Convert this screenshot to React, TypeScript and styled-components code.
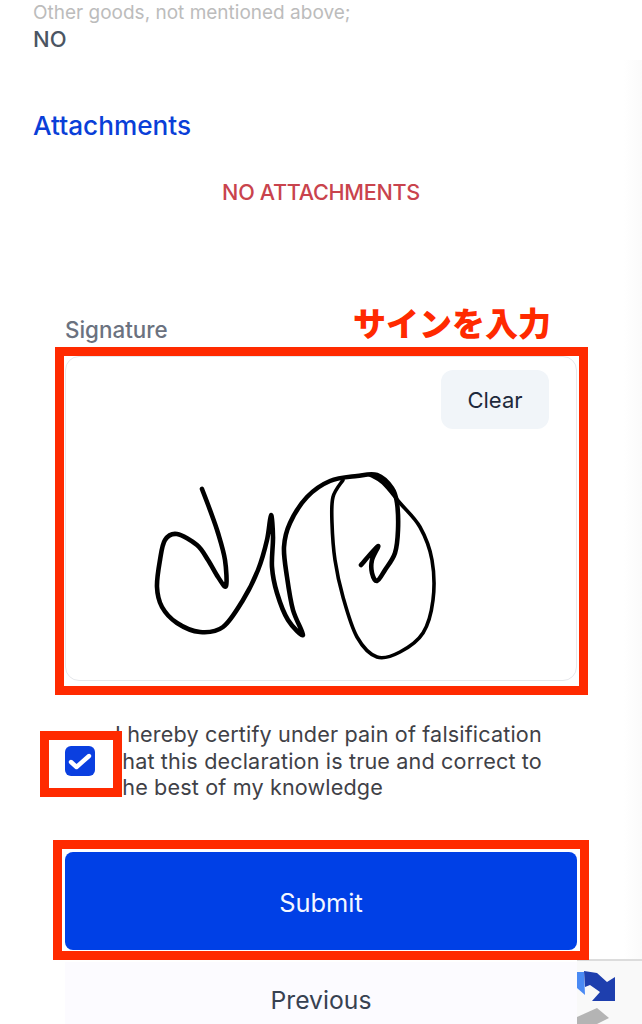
import React, { FC } from 'react'
import styled, { createGlobalStyle } from 'styled-components'

const GlobalStyle = createGlobalStyle`
html, body {
    margin: 0;
    padding: 0;
    background: #fff;
}
`

const Page = styled.div`
position: relative;
width: 642px;
height: 1024px;
overflow: hidden;
background: #fff;
font-family: Inter, "Noto Sans", "Noto Sans CJK JP", sans-serif;
`

const Edge = styled.div`
position: absolute;
top: 60px;
right: 0;
bottom: 64px;
width: 18px;
background: linear-gradient(to right, #fff, #fafafa);
`

const Summary = styled.section`
padding: 1px 33px 0;
`

const FieldLabel = styled.div`
font-size: 19px;
line-height: 24px;
color: #bcbcbc;
`

const FieldValue = styled.div`
margin-top: 1px;
font-size: 22px;
line-height: 27px;
font-weight: 500;
color: #4b5563;
`

const SectionTitle = styled.h2`
margin: 57px 0 0;
font-size: 26.2px;
line-height: 32px;
font-weight: 500;
color: #0a3fd8;
`

const EmptyNote = styled.p`
margin: 37px 0 0;
text-align: center;
font-size: 21.6px;
line-height: 26px;
font-weight: 500;
letter-spacing: -0.3px;
color: #c9434d;
`

const Form = styled.form`
margin-top: 94px;
padding: 0 65px;
`

const SignatureHead = styled.div`
display: flex;
justify-content: space-between;
align-items: flex-end;
height: 42px;
`

const SignatureLabel = styled.label`
position: relative;
top: 2px;
font-size: 22.4px;
line-height: 26px;
font-weight: 500;
color: #6b7280;
`

const Callout = styled.span`
margin: 0 26px 0 0;
position: relative;
top: 3px;
font-family: "Noto Sans CJK JP", sans-serif;
font-size: 33px;
line-height: 44px;
font-weight: 900;
color: #ff2a00;
`

const Framed = styled.div`
position: relative;
`

const Frame = styled.div<{ $inset: string }>`
position: absolute;
inset: ${p => p.$inset};
border: 9px solid #ff2a00;
pointer-events: none;
z-index: 2;
`

const SignaturePad = styled.div`
display: flex;
flex-direction: column;
align-items: flex-end;
box-sizing: border-box;
height: 325px;
margin-top: 15px;
padding: 13px 27px 0 0;
background: #fff;
border: 1px solid #e5e7eb;
border-radius: 14px;
`

const ClearButton = styled.button`
width: 108px;
height: 59px;
padding: 0;
border: none;
border-radius: 12px;
background: #f1f5f9;
font-family: inherit;
font-size: 22px;
color: #1e293b;
`

const SignatureDrawing = styled.svg`
display: block;
align-self: flex-start;
margin: 41px 0 0 84px;
`

const Certify = styled.div`
display: flex;
align-items: center;
margin-top: 40px;
`

const CheckBox = styled.span`
display: flex;
flex: none;
align-items: center;
justify-content: center;
width: 30px;
height: 30px;
border-radius: 6px;
background: #0a3fe0;
`

const CertifyText = styled.p`
margin: 0 -32px 0 20px;
font-size: 21.6px;
line-height: 26.5px;
letter-spacing: 0.15px;
white-space: nowrap;
color: #3f4147;
`

const SubmitButton = styled.button`
display: block;
width: 100%;
height: 98px;
padding: 3px 0 0;
border: none;
border-radius: 8px;
background: #0040e6;
font-family: inherit;
font-size: 25.4px;
color: #f4f7ff;
`

const SubmitRow = styled.div`
margin-top: 51px;
`

const Footer = styled.div`
position: absolute;
left: 65px;
right: 0;
bottom: 0;
height: 62px;
padding-right: 65px;
display: flex;
align-items: flex-end;
justify-content: center;
background: #fcfbff;
`

const PreviousButton = styled.button`
height: 48px;
width: 100%;
padding: 0;
border: none;
background: none;
font-family: inherit;
font-size: 24.7px;
color: #374151;
`

const CaptchaBadge = styled.div`
position: absolute;
right: 0;
bottom: 0;
width: 65px;
height: 65px;
box-sizing: border-box;
border-top: 2px solid #dcdcdc;
background: #f9f9f9;
overflow: hidden;
`

const CaptchaIcon = styled.svg`
display: block;
`

// signature strokes, sampled from the picture
const stroke1: [number, number][] = [
    [202, 489], [210, 510], [218, 533], [225, 560], [226, 586], [218, 577], [208, 560], [197, 545],
    [177, 534], [165, 540], [160, 560], [157, 587], [162, 607], [177, 623], [200, 632], [223, 627],
    [243, 600], [258, 570], [267, 540], [271, 515], [273, 537], [272, 567], [277, 593], [288, 620],
    [303, 635], [293, 610], [287, 577], [284, 547], [290, 523], [307, 497], [330, 481], [357, 476],
    [377, 475], [392, 488], [397, 503], [398, 530], [395, 553], [385, 570], [377, 581], [372, 573],
    [372, 560], [378, 546], [361, 565],
]
const stroke2: [number, number][] = [
    [343, 480], [333, 497], [332, 523], [335, 560], [343, 597], [357, 637], [377, 657], [400, 652],
    [423, 633], [433, 600], [432, 560], [420, 527], [400, 503], [383, 483], [370, 475],
]

const smooth = (pts: [number, number][]) => {
    let d = `M${pts[0][0]} ${pts[0][1]}`
    for (let i = 0; i < pts.length - 1; i++) {
        const p0 = pts[Math.max(i - 1, 0)]
        const p1 = pts[i]
        const p2 = pts[i + 1]
        const p3 = pts[Math.min(i + 2, pts.length - 1)]
        const c1 = [p1[0] + (p2[0] - p0[0]) / 6, p1[1] + (p2[1] - p0[1]) / 6]
        const c2 = [p2[0] - (p3[0] - p1[0]) / 6, p2[1] - (p3[1] - p1[1]) / 6]
        d += ` C${c1[0]} ${c1[1]} ${c2[0]} ${c2[1]} ${p2[0]} ${p2[1]}`
    }
    return d
}

const App: FC = () => {
    return (
        <Page>
            <GlobalStyle />
            <Edge />
            <Summary>
                <FieldLabel>Other goods, not mentioned above;</FieldLabel>
                <FieldValue>NO</FieldValue>
                <SectionTitle>Attachments</SectionTitle>
                <EmptyNote>NO ATTACHMENTS</EmptyNote>
            </Summary>
            <Form>
                <SignatureHead>
                    <SignatureLabel>Signature</SignatureLabel>
                    <Callout>サインを入力</Callout>
                </SignatureHead>
                <Framed>
                    <Frame $inset="-9px -11px -14px -10px" />
                    <SignaturePad>
                        <ClearButton type="button">Clear</ClearButton>
                        <SignatureDrawing width="290" height="195" viewBox="150 470 290 195" fill="none" stroke="#000" strokeLinecap="round" strokeLinejoin="round">
                            <path d={smooth(stroke1)} strokeWidth="4.6" />
                            <path d={smooth(stroke2)} strokeWidth="3.6" />
                        </SignatureDrawing>
                    </SignaturePad>
                </Framed>
                <Certify>
                    <Framed>
                        <Frame $inset="-15px -27px -21px -25px" />
                        <CheckBox>
                            <svg width="24" height="18" viewBox="0 0 24 18" fill="none" stroke="#fff" strokeWidth="4.4" strokeLinecap="round" strokeLinejoin="round">
                                <path d="M3 10l5.5 5L21 4" />
                            </svg>
                        </CheckBox>
                    </Framed>
                    <CertifyText>
                        I hereby certify under pain of falsification<br />
                        that this declaration is true and correct to<br />
                        the best of my knowledge
                    </CertifyText>
                </Certify>
                <SubmitRow>
                    <Framed>
                        <Frame $inset="-12px -12px -10px -12px" />
                        <SubmitButton type="button">Submit</SubmitButton>
                    </Framed>
                </SubmitRow>
            </Form>
            <Footer>
                <PreviousButton type="button">Previous</PreviousButton>
            </Footer>
            <CaptchaBadge>
                <CaptchaIcon width="65" height="63" viewBox="0 0 65 63">
                    <path d="M0 11H7L8 34 0 27z" fill="#4a8af4" />
                    <path d="M7 10L20 12 30 21 38 16V40H15L23 31 13 24 8 26z" fill="#1e3fae" />
                    <path d="M0 56L20 47 32 57 20 63H0z" fill="#b4b4b4" />
                </CaptchaIcon>
            </CaptchaBadge>
        </Page>
    )
}

export default App
